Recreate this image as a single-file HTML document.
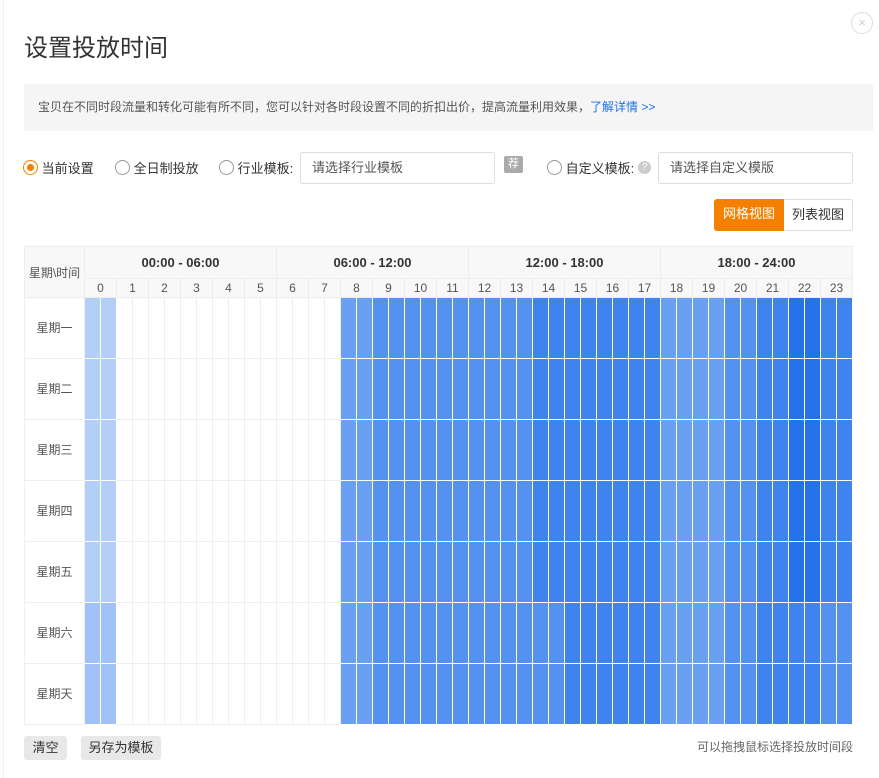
<!DOCTYPE html>
<html><head><meta charset="utf-8"><style>
*{box-sizing:border-box;margin:0;padding:0}
body{width:879px;height:778px;background:#fff;font-family:"Liberation Sans","Noto Sans CJK SC",sans-serif;color:#333;position:relative;overflow:hidden;font-size:12px}
.abs{position:absolute}
.title{left:24px;top:28px;font-size:24px;color:#333}
.close{left:851px;top:12px;width:22px;height:22px;border:1px solid #ddd;border-radius:50%;color:#ccc;text-align:center;line-height:20px;font-size:13px}
.tip{left:24px;top:84px;width:849px;height:47px;background:#f5f5f5;line-height:47px;padding-left:14px;font-size:12px;color:#555}
.tip a{color:#1a73e8;text-decoration:none}
.radio{display:inline-block;width:15px;height:15px;border:1px solid #999;border-radius:50%;vertical-align:middle;position:relative}
.radio.on{border-color:#f38000}
.radio.on:after{content:"";position:absolute;left:3px;top:3px;width:7px;height:7px;border-radius:50%;background:#f38000}
.opt{top:158px;font-size:13px;color:#333}
.opt span{vertical-align:middle}
.inp{top:152px;height:32px;border:1px solid #ddd;border-radius:3px;line-height:30px;padding-left:11px;font-size:13px;color:#555}
.rec{left:504px;top:156px;width:19px;height:17px;background:#aaa;color:#fff;font-size:11px;text-align:center;line-height:17px;border-radius:2px}
.q{display:inline-block;width:13px;height:13px;border-radius:50%;background:#ccc;color:#fff;font-size:10px;text-align:center;line-height:13px;vertical-align:middle}
.vbtn{top:199px;height:32px;line-height:30px;font-size:13px;text-align:center}
.btn{top:736px;height:24px;line-height:24px;background:#e8e8e8;border-radius:3px;font-size:13px;text-align:center;color:#333}
.grid{left:24px;top:246px;width:830px;border-top:1px solid #eee;border-left:1px solid #eee}
.r{display:flex}
.lab{width:60px;flex:none;border-right:1px solid #eee;border-bottom:1px solid #eee;text-align:center;color:#555;font-size:12px}
.g{width:192px;height:32px;border-right:1px solid #eee;border-bottom:1px solid #eee;background:#f8f8f8;text-align:center;line-height:32px;font-weight:bold;font-size:13px}
.h{width:32px;height:19px;border-right:1px solid #eee;border-bottom:1px solid #eee;background:#f8f8f8;text-align:center;line-height:19px;color:#555;font-size:12px}
.c0{width:32px;height:61px;border-bottom:1px solid #fff;background:repeating-linear-gradient(90deg,transparent 0 15px,#fff 15px 16px),#b3cff8}
.c1{width:224px;height:61px;border-bottom:1px solid #eee;background:repeating-linear-gradient(90deg,#fff 0 15px,#eee 15px 16px)}
.c2{width:512px;height:61px;border-bottom:1px solid #fff}
.wk{background:repeating-linear-gradient(90deg,transparent 0 15px,#fff 15px 16px),linear-gradient(90deg,#6aa0f2 0 32px,#5592f0 32px 192px,#3f84ee 192px 320px,#6aa0f2 320px 384px,#5592f0 384px 416px,#3f84ee 416px 448px,#2473ea 448px 480px,#3f84ee 480px 512px)}
.we{background:repeating-linear-gradient(90deg,transparent 0 15px,#fff 15px 16px),linear-gradient(90deg,#6aa0f2 0 32px,#5592f0 32px 224px,#3f84ee 224px 320px,#6aa0f2 320px 384px,#5592f0 384px 416px,#3f84ee 416px 480px,#5592f0 480px 512px)}
.we0{background:repeating-linear-gradient(90deg,transparent 0 15px,#fff 15px 16px),#a0c2f6}
.dl{height:61px;line-height:60px}
</style></head><body>
<div class="abs" style="left:3px;top:0;width:1px;height:778px;background:#f0f0f0"></div>
<div class="abs title">设置投放时间</div>
<div class="abs close">×</div>
<div class="abs tip">宝贝在不同时段流量和转化可能有所不同，您可以针对各时段设置不同的折扣出价，提高流量利用效果，<a>了解详情 &gt;&gt;</a></div>
<div class="abs opt" style="left:23px"><i class="radio on"></i><span> 当前设置</span></div>
<div class="abs opt" style="left:115px"><i class="radio"></i><span> 全日制投放</span></div>
<div class="abs opt" style="left:219px"><i class="radio"></i><span> 行业模板:</span></div>
<div class="abs inp" style="left:300px;width:195px">请选择行业模板</div>
<div class="abs rec">荐</div>
<div class="abs opt" style="left:547px"><i class="radio"></i><span> 自定义模板: </span><i class="q">?</i></div>
<div class="abs inp" style="left:658px;width:195px">请选择自定义模版</div>
<div class="abs vbtn" style="left:714px;width:70px;background:#f38000;color:#fff;border-radius:3px 0 0 3px">网格视图</div>
<div class="abs vbtn" style="left:784px;width:69px;border:1px solid #ddd;border-left:none;border-radius:0 3px 3px 0;color:#333">列表视图</div>

<div class="abs grid">
<div class="r">
<div class="lab" style="height:51px;line-height:16px;background:#f8f8f8;padding-top:18px">星期\时间</div>
<div>
<div class="r"><div class="g">00:00 - 06:00</div><div class="g">06:00 - 12:00</div><div class="g">12:00 - 18:00</div><div class="g">18:00 - 24:00</div></div>
<div class="r"><div class="h">0</div><div class="h">1</div><div class="h">2</div><div class="h">3</div><div class="h">4</div><div class="h">5</div><div class="h">6</div><div class="h">7</div><div class="h">8</div><div class="h">9</div><div class="h">10</div><div class="h">11</div><div class="h">12</div><div class="h">13</div><div class="h">14</div><div class="h">15</div><div class="h">16</div><div class="h">17</div><div class="h">18</div><div class="h">19</div><div class="h">20</div><div class="h">21</div><div class="h">22</div><div class="h">23</div></div>
</div>
</div>
<div class="r"><div class="lab dl">星期一</div><div class="c0"></div><div class="c1"></div><div class="c2 wk"></div></div>
<div class="r"><div class="lab dl">星期二</div><div class="c0"></div><div class="c1"></div><div class="c2 wk"></div></div>
<div class="r"><div class="lab dl">星期三</div><div class="c0"></div><div class="c1"></div><div class="c2 wk"></div></div>
<div class="r"><div class="lab dl">星期四</div><div class="c0"></div><div class="c1"></div><div class="c2 wk"></div></div>
<div class="r"><div class="lab dl">星期五</div><div class="c0"></div><div class="c1"></div><div class="c2 wk"></div></div>
<div class="r"><div class="lab dl">星期六</div><div class="c0 we0"></div><div class="c1"></div><div class="c2 we"></div></div>
<div class="r"><div class="lab dl">星期天</div><div class="c0 we0"></div><div class="c1"></div><div class="c2 we"></div></div>
</div>

<div class="abs btn" style="left:24px;width:43px">清空</div>
<div class="abs btn" style="left:81px;width:80px">另存为模板</div>
<div class="abs" style="left:697px;top:738px;font-size:12px;color:#666">可以拖拽鼠标选择投放时间段</div>
</body></html>
